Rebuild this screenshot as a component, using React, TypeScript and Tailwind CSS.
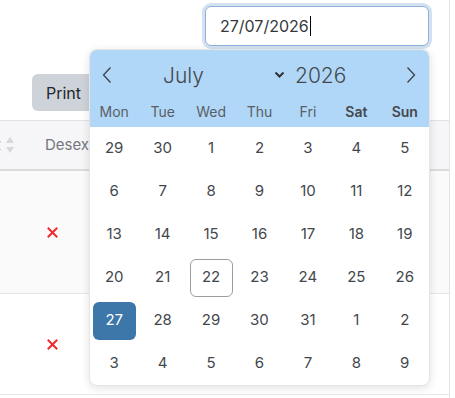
import React from "react";

const font = { fontFamily: "Inter, 'Noto Sans', sans-serif" };

const weekdays = ["Mon", "Tue", "Wed", "Thu", "Fri", "Sat", "Sun"];

const weeks = [
  [29, 30, 1, 2, 3, 4, 5],
  [6, 7, 8, 9, 10, 11, 12],
  [13, 14, 15, 16, 17, 18, 19],
  [20, 21, 22, 23, 24, 25, 26],
  [27, 28, 29, 30, 31, 1, 2],
  [3, 4, 5, 6, 7, 8, 9],
];

function Cross() {
  return (
    <svg width="11" height="11" viewBox="0 0 11 11">
      <path d="M1.5 1.5l8 8M9.5 1.5l-8 8" stroke="#f02a2a" strokeWidth="2" strokeLinecap="square" />
    </svg>
  );
}

function DatePicker() {
  return (
    <div className="absolute left-[89px] top-[49px] w-[341px] overflow-hidden rounded-lg border border-[#e6e6e6] bg-white shadow-[0_2px_8px_rgba(0,0,0,0.12)]">
      <div className="bg-[#b0d7f8] pt-[10px]">
        <div className="flex h-[30px] items-center pl-[12px] pr-[13px] text-[#44484d]">
          <svg width="10" height="18" viewBox="0 0 10 18">
            <path d="M8.5 1.5L1.5 9l7 7.5" fill="none" stroke="#3d4147" strokeWidth="1.3" />
          </svg>
          <div className="ml-[51px] flex w-[122px] items-center justify-between">
            <span className="text-[21px] font-light leading-none">July</span>
            <svg width="11" height="8" viewBox="0 0 11 8">
              <path d="M1.5 1.5l4 4 4-4" fill="none" stroke="#2f3338" strokeWidth="2" />
            </svg>
          </div>
          <span className="ml-[10px] text-[21px] font-light leading-none">2026</span>
          <svg className="ml-auto" width="10" height="18" viewBox="0 0 10 18">
            <path d="M1.5 1.5L8.5 9l-7 7.5" fill="none" stroke="#3d4147" strokeWidth="1.3" />
          </svg>
        </div>
        <div className="grid h-[37px] grid-cols-7 items-center pt-[6px] text-[14px] text-[#5a5e64]">
          {weekdays.map((d, i) => (
            <div key={d} className={`text-center ${i > 4 ? "font-semibold text-[#44484d]" : ""}`}>
              {d}
            </div>
          ))}
        </div>
      </div>
      <div className="grid grid-cols-7 text-[15px] text-[#43474c]">
        {weeks.flatMap((w, r) =>
          w.map((d, c) => {
            const selected = r === 4 && c === 0;
            const today = r === 3 && c === 2;
            return (
              <div key={`${r}-${c}`} className="flex h-[43px] items-center justify-center">
                <div
                  className={`flex h-[38px] w-[43px] items-center justify-center rounded-md ${
                    selected
                      ? "bg-[#3d76a9] text-white"
                      : today
                      ? "border border-[#9a9ea3]"
                      : ""
                  }`}
                >
                  {d}
                </div>
              </div>
            );
          })
        )}
      </div>
    </div>
  );
}

export default function App() {
  return (
    <div className="relative h-[398px] w-[455px] overflow-hidden bg-white" style={font}>
      <div className="h-full w-[450px] border-r border-[#e4e4e4]">
        <div className="flex justify-end pr-[17px] pt-[3px]">
          <div className="rounded-[9px] bg-[#d3e1f1] p-[3px]">
            <div className="flex h-[40px] w-[224px] items-center rounded-md border border-[#8fb1dc] bg-white pl-[14px] text-[16px] text-[#34383c]">
              27/07/2026
              <span className="ml-[1px] h-[20px] w-px bg-black" />
            </div>
          </div>
        </div>
        <div className="mt-[25px] pl-[32px]">
          <div className="flex h-[37px] w-[80px] items-center rounded-md bg-[#ced3d9] pl-[14px] text-[16px] text-[#24282c]">
            Print
          </div>
        </div>
        <div className="mt-[9px]">
          <div className="flex h-[51px] items-center border-y border-t-[#e2e2e2] border-b-[#dcdcdc] border-b-2 bg-[#f6f6f8] text-[15px] text-[#74787d]">
            <span className="-ml-[4px] text-[#7aa7d8]">t</span>
            <svg className="ml-[4px]" width="10" height="18" viewBox="0 0 10 18">
              <path d="M5 1l4 6H1z" fill="#d8d8dc" />
              <path d="M5 17l4-6H1z" fill="#d8d8dc" />
            </svg>
            <span className="ml-[30px]">Desexed</span>
          </div>
          <div className="flex h-[123px] items-center border-b border-[#e6e6e6] bg-[#fafafa] pl-[47px]">
            <Cross />
          </div>
          <div className="flex h-[101px] items-center border-b border-[#e6e6e6] pl-[47px]">
            <Cross />
          </div>
        </div>
      </div>
      <DatePicker />
    </div>
  );
}
